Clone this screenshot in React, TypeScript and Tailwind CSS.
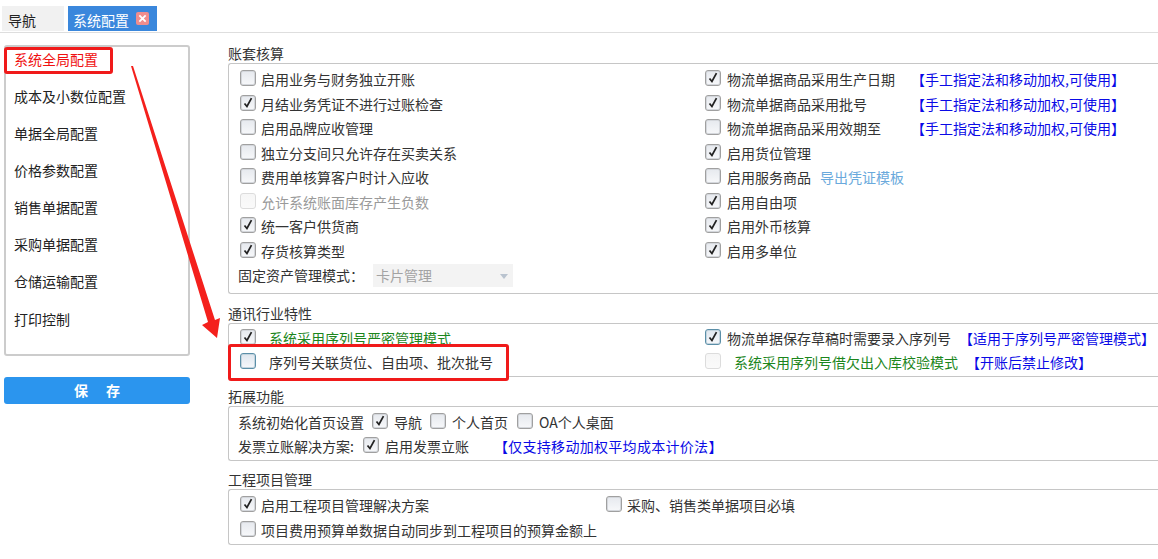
import React from 'react';

const FONT = "font-['Microsoft_YaHei','Noto_Sans_CJK_SC','Noto_Sans',sans-serif]";

const Check: React.FC<{ on?: boolean; off?: boolean; blue?: boolean }> = ({ on, off, blue }) => (
  <span
    className={`-mt-[3px] inline-flex h-4 w-4 shrink-0 items-center justify-center rounded-[3px] border bg-gradient-to-b ${
      off
        ? 'border-[#dcdcdc] from-[#f6f6f6] to-[#fafafa]'
        : blue
          ? 'border-[#5b8fa8] from-[#dfe6ee] to-[#f6f8fb] shadow-[inset_0_0_0_1px_#c4d4de]'
          : 'border-[#a0a0a0] from-[#e6e9ee] to-[#f7f8fa] shadow-[inset_0_0_0_1px_#d4d7dc]'
    }`}
  >
    {on && (
      <svg viewBox="0 0 16 16" className="h-4 w-4">
        <path d="M4 8.5 L6.8 12 L12 2.5" fill="none" stroke="#222" strokeWidth="2" />
      </svg>
    )}
  </span>
);

const Row: React.FC<{ children: React.ReactNode; className?: string }> = ({ children, className }) => (
  <div className={`flex h-[24.5px] items-center whitespace-nowrap ${className ?? ''}`}>{children}</div>
);

const Opt: React.FC<{ on?: boolean; label: string }> = ({ on, label }) => (
  <Row>
    <Check on={on} />
    <span className="ml-[5px]">{label}</span>
  </Row>
);

const Title: React.FC<{ children: React.ReactNode; className?: string }> = ({ children, className }) => (
  <div className={`h-4 text-[14px] leading-[13px] ${className ?? ''}`}>{children}</div>
);

const Box: React.FC<{ children: React.ReactNode; className?: string }> = ({ children, className }) => (
  <div className={`rounded-l-[3px] border-y border-l border-[#c6c6c6] ${className ?? ''}`}>{children}</div>
);

const menu = ['成本及小数位配置', '单据全局配置', '价格参数配置', '销售单据配置', '采购单据配置', '仓储运输配置', '打印控制'];

const MANUAL = '【手工指定法和移动加权,可使用】';

export default function App() {
  return (
    <div className={`relative h-[559px] w-[1158px] overflow-hidden bg-white text-[14px] text-[#333] ${FONT}`}>
      {/* Tabs */}
      <div className="flex h-[33px] items-end gap-1 border-b border-[#dedede] pb-px pl-[2px]">
        <div className="flex h-[25px] w-[62px] items-center bg-[#f1f1f1] pl-[6px] pt-[3px] text-[#222]">导航</div>
        <div className="flex h-[25px] w-[89px] items-center bg-[#3a87dc] pl-[5px] text-white">
          <span className="pt-[3px]">系统配置</span>
          <span className="ml-[7px] flex h-[13px] w-[13px] items-center justify-center rounded-[2px] bg-[#f08d8d]">
            <svg viewBox="0 0 10 10" className="h-[9px] w-[9px]">
              <path d="M1.5 1.5 L8.5 8.5 M8.5 1.5 L1.5 8.5" stroke="#fff" strokeWidth="2" />
            </svg>
          </span>
        </div>
      </div>

      <div className="flex pl-1">
        {/* Left menu */}
        <div className="w-[186px] shrink-0 pt-3">
          <div className="h-[311px] rounded-[3px] border-2 border-[#cccccc] pl-[8px] pt-[2px] text-[#222]">
            <div className="flex h-[20px] items-center text-[#f01010]">系统全局配置</div>
            {menu.map((m) => (
              <div key={m} className="mt-[17.15px] flex h-[20px] items-center first:mt-[16.9px] last:mt-[17.4px]">
                {m}
              </div>
            ))}
          </div>
          <div className="mt-[21px] flex h-[27px] items-center justify-center gap-[18px] rounded-[3px] bg-[#2b95ee] font-bold text-white">
            <span>保</span>
            <span>存</span>
          </div>
        </div>

        {/* Right config */}
        <div className="ml-[38px] min-w-0 flex-1 pt-[14px]">
          <Title>账套核算</Title>
          <Box className="h-[231px] pl-[11px] pt-[3.5px]">
            <div className="grid grid-cols-[465px_1fr]">
              <div>
                <Opt label="启用业务与财务独立开账" />
                <Opt on label="月结业务凭证不进行过账检查" />
                <Opt label="启用品牌应收管理" />
                <Opt label="独立分支间只允许存在买卖关系" />
                <Opt label="费用单核算客户时计入应收" />
                <Row>
                  <Check off />
                  <span className="ml-[5px] text-[#9a9a9a]">允许系统账面库存产生负数</span>
                </Row>
                <Opt on label="统一客户供货商" />
                <Opt on label="存货核算类型" />
                <Row className="-ml-[2px]">
                  <span className="w-[135px]">固定资产管理模式：</span>
                  <div className="flex h-[23px] w-[140px] items-center justify-between bg-[#f3f3f3] pl-[3px] pr-[5px] text-[#a3a3a3]">
                    卡片管理
                    <span className="mt-px h-0 w-0 border-x-[4px] border-t-[5px] border-x-transparent border-t-[#b9c3cf]" />
                  </div>
                </Row>
              </div>
              <div>
                <Row>
                  <Check on />
                  <span className="ml-[6px] w-[184px]">物流单据商品采用生产日期</span>
                  <span className="text-[#0a0ae6]">{MANUAL}</span>
                </Row>
                <Row>
                  <Check on />
                  <span className="ml-[6px] w-[184px]">物流单据商品采用批号</span>
                  <span className="text-[#0a0ae6]">{MANUAL}</span>
                </Row>
                <Row>
                  <Check />
                  <span className="ml-[6px] w-[184px]">物流单据商品采用效期至</span>
                  <span className="text-[#0a0ae6]">{MANUAL}</span>
                </Row>
                <Row>
                  <Check on />
                  <span className="ml-[6px]">启用货位管理</span>
                </Row>
                <Row>
                  <Check />
                  <span className="ml-[6px]">启用服务商品</span>
                  <span className="ml-[9px] text-[#6aa9dc]">导出凭证模板</span>
                </Row>
                <Row>
                  <Check on />
                  <span className="ml-[6px]">启用自由项</span>
                </Row>
                <Row>
                  <Check on />
                  <span className="ml-[6px]">启用外币核算</span>
                </Row>
                <Row>
                  <Check on />
                  <span className="ml-[6px]">启用多单位</span>
                </Row>
              </div>
            </div>
          </Box>

          <Title className="mt-[13px]">通讯行业特性</Title>
          <Box className="h-[54px] pl-[11px] pt-[2px]">
            <div className="grid grid-cols-[465px_1fr]">
              <div>
                <Row>
                  <Check on />
                  <span className="ml-[13px] text-[#1c861c]">系统采用序列号严密管理模式</span>
                </Row>
                {/* annotation box lies over the first row */}
                <div className="relative h-[24.5px]">
                  <div className="absolute -left-[12px] -top-[7px] z-10 flex h-[37px] w-[281px] items-center rounded-[3px] border-[3px] border-[#f01a1a] bg-white pl-[9px]">
                    <Check blue />
                    <span className="ml-[13px] whitespace-nowrap">序列号关联货位、自由项、批次批号</span>
                  </div>
                </div>
              </div>
              <div>
                <Row>
                  <Check on blue />
                  <span className="ml-[6px]">物流单据保存草稿时需要录入序列号</span>
                  <span className="ml-[8px] text-[#0a0ae6]">【适用于序列号严密管理模式】</span>
                </Row>
                <Row>
                  <Check off />
                  <span className="ml-[13px] text-[#1c861c]">系统采用序列号借欠出入库校验模式</span>
                  <span className="ml-[8px] text-[#0a0ae6]">【开账后禁止修改】</span>
                </Row>
              </div>
            </div>
          </Box>

          <Title className="mt-[13px]">拓展功能</Title>
          <Box className="h-[55px] pl-[9px] pt-[3px]">
            <Row>
              系统初始化首页设置
              <span className="ml-[8px] flex"><Check on /></span>
              <span className="ml-[6px]">导航</span>
              <span className="ml-[8px] flex"><Check /></span>
              <span className="ml-[6px]">个人首页</span>
              <span className="ml-[9px] flex"><Check /></span>
              <span className="ml-[6px]">OA个人桌面</span>
            </Row>
            <Row>
              发票立账解决方案:
              <span className="ml-[9px] flex"><Check on /></span>
              <span className="ml-[6px] w-[109px]">启用发票立账</span>
              <span className="tracking-[0.3px] text-[#0a0ae6]">【仅支持移动加权平均成本计价法】</span>
            </Row>
          </Box>

          <Title className="mt-[12px]">工程项目管理</Title>
          <Box className="h-[56px] pl-[11px] pt-[3.5px]">
            <Row>
              <Check on />
              <span className="ml-[5px] w-[345px]">启用工程项目管理解决方案</span>
              <Check />
              <span className="ml-[5px]">采购、销售类单据项目必填</span>
            </Row>
            <Opt label="项目费用预算单数据自动同步到工程项目的预算金额上" />
          </Box>
        </div>
      </div>

      {/* Annotations */}
      <div className="absolute left-[4px] top-[47px] h-[27px] w-[109px] rounded-[3px] border-[3px] border-[#f01a1a]" />
      <svg className="pointer-events-none absolute left-0 top-0 z-20" width="1158" height="559">
        <polygon points="131,66 133,66 215,320 220,318 217,338 202,325 208,322" fill="#f4201c" />
      </svg>
    </div>
  );
}
